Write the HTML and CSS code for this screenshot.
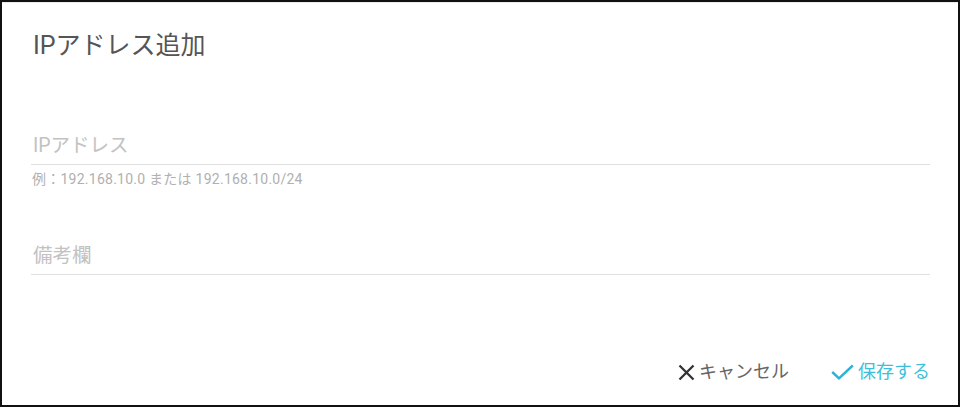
FILE: index.html
```html
<!DOCTYPE html>
<html lang="ja">
<head>
<meta charset="utf-8">
<link rel="stylesheet" href="styles.css">
</head>
<body>
<div class="dialog">
  <h1 class="title">IPアドレス追加</h1>
  <div class="field field-ip">
    <div class="input">IPアドレス</div>
    <div class="hint">例：192.168.10.0 または 192.168.10.0/24</div>
  </div>
  <div class="field field-note">
    <div class="input">備考欄</div>
  </div>
  <div class="actions">
    <button class="btn btn-cancel">
      <svg class="icon-x" width="17" height="17" viewBox="0 0 17 17"><path d="M1.5 1.5 L15.5 15.5 M15.5 1.5 L1.5 15.5" stroke="#333" stroke-width="2.3" fill="none"/></svg>
      <span>キャンセル</span>
    </button>
    <button class="btn btn-save">
      <svg class="icon-check" width="23" height="16" viewBox="0 0 23 16"><path d="M1.2 8 L8 14.3 L21.8 1.5" stroke="#2bb3d5" stroke-width="2.4" fill="none"/></svg>
      <span>保存する</span>
    </button>
  </div>
</div>
</body>
</html>
```
FILE: styles.css
```css
html, body {
  margin: 0;
  padding: 0;
  background: #fff;
}
body {
  font-family: Roboto, "Noto Sans CJK JP", sans-serif;
}
.dialog {
  width: 960px;
  height: 407px;
  box-sizing: border-box;
  border: 2px solid #111;
  box-shadow: inset 0 1px 0 #ececec;
  padding: 0 28px 0 29px;
  display: flex;
  flex-direction: column;
}
.title {
  margin: 29px 0 0 2px;
  font-size: 25px;
  font-weight: 400;
  color: #555;
  line-height: 30px;
}
.field {
  display: flex;
  flex-direction: column;
}
.field-ip {
  margin-top: 71px;
}
.field-note {
  margin-top: 54px;
}
.input {
  font-size: 19.5px;
  color: #c2c2c2;
  line-height: 28px;
  padding: 0 0 4px 2px;
  border-bottom: 1px solid #e0e0e0;
}
.hint {
  font-size: 14px;
  letter-spacing: 0.25px;
  color: #b0b0b0;
  margin-top: 5px;
  padding-left: 1px;
  line-height: 18px;
}
.actions {
  margin-top: auto;
  margin-bottom: 20px;
  display: flex;
  justify-content: flex-end;
  gap: 42px;
}
.btn {
  background: none;
  border: none;
  padding: 0;
  display: flex;
  align-items: center;
  gap: 4px;
  font-family: Roboto, "Noto Sans CJK JP", sans-serif;
  font-size: 18px;
  line-height: 26px;
}
.btn-cancel { color: #666; }
.btn-save { color: #3dbfdc; gap: 4px; }
```
